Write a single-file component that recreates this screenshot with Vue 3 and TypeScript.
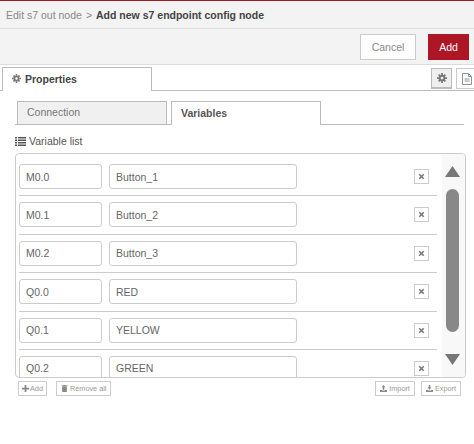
<script setup lang="ts">
const rows = [
  { addr: 'M0.0', name: 'Button_1' },
  { addr: 'M0.1', name: 'Button_2' },
  { addr: 'M0.2', name: 'Button_3' },
  { addr: 'Q0.0', name: 'RED' },
  { addr: 'Q0.1', name: 'YELLOW' },
  { addr: 'Q0.2', name: 'GREEN' }
]
</script>

<template>
  <div class="tray">
    <div class="title">
      <span class="crumb">Edit s7 out node</span>
      <span class="sep">&gt;</span>
      <b>Add new s7 endpoint config node</b>
    </div>
    <div class="toolbar">
      <button class="btn-cancel">Cancel</button>
      <button class="btn-add">Add</button>
    </div>
    <div class="tabs-top">
      <div class="tab-main">
        <svg class="ico-gear" viewBox="0 0 16 16"><path d="M8 2.6a5.4 5.4 0 1 0 0 10.8A5.4 5.4 0 0 0 8 2.6zm0 3.2a2.2 2.2 0 1 1 0 4.4 2.2 2.2 0 0 1 0-4.4z" /><path d="M6.6 0h2.8v3H6.6zM6.6 13h2.8v3H6.6zM0 6.6h3v2.8H0zM13 6.6h3v2.8h-3zM1.6 3.6l2-2 2 2-2 2zM10.4 3.6l2-2 2 2-2 2zM1.6 12.4l2-2 2 2-2 2zM10.4 12.4l2-2 2 2-2 2z" /></svg>
        Properties
      </div>
      <div class="side-btns">
        <div class="side-btn active">
          <svg class="ico-gear big" viewBox="0 0 16 16"><path d="M8 2.6a5.4 5.4 0 1 0 0 10.8A5.4 5.4 0 0 0 8 2.6zm0 3.2a2.2 2.2 0 1 1 0 4.4 2.2 2.2 0 0 1 0-4.4z" /><path d="M6.6 0h2.8v3H6.6zM6.6 13h2.8v3H6.6zM0 6.6h3v2.8H0zM13 6.6h3v2.8h-3zM1.6 3.6l2-2 2 2-2 2zM10.4 3.6l2-2 2 2-2 2zM1.6 12.4l2-2 2 2-2 2zM10.4 12.4l2-2 2 2-2 2z" /></svg>
        </div>
        <div class="side-btn">
          <svg class="ico-file" viewBox="0 0 10 12"><path d="M.5.5h6L9.5 3.5v8H.5zM6.5.5v3h3M2.5 6h5M2.5 8h5" /></svg>
        </div>
      </div>
    </div>
    <div class="content">
      <div class="tabs-inner">
        <div class="tab-in off">Connection</div>
        <div class="tab-in on">Variables</div>
      </div>
      <div class="list-label">
        <svg class="ico-list" viewBox="0 0 11 9"><path d="M0 0h2v1.5H0zM3 0h8v1.5H3zM0 2.5h2V4H0zM3 2.5h8V4H3zM0 5h2v1.5H0zM3 5h8v1.5H3zM0 7.5h2V9H0zM3 7.5h8V9H3z" /></svg>
        Variable list
      </div>
      <div class="list-box">
        <div class="rows">
          <div v-for="r in rows" :key="r.addr" class="row">
            <input class="inp addr" :value="r.addr" />
            <input class="inp name" :value="r.name" />
            <span class="del">
              <svg viewBox="0 0 8 8"><path d="M1.4 1.4l5.2 5.2M6.6 1.4L1.4 6.6" /></svg>
            </span>
          </div>
        </div>
        <div class="scroll">
          <svg class="arrow" viewBox="0 0 15 11"><path d="M7.5 0L15 11H0z" /></svg>
          <div class="track"><div class="thumb"></div></div>
          <svg class="arrow" viewBox="0 0 15 11"><path d="M0 0h15L7.5 11z" /></svg>
        </div>
      </div>
      <div class="actions">
        <div class="group left">
          <button class="mini tight">
            <svg viewBox="0 0 8 8"><path d="M3 0h2v3h3v2H5v3H3V5H0V3h3z" /></svg>Add
          </button>
          <button class="mini">
            <svg viewBox="0 0 8 9"><path d="M1 2h6v7H1zM0 .8h8v.8H0zM2.5 0h3v.8h-3z" /></svg>Remove all
          </button>
        </div>
        <div class="group right">
          <button class="mini">
            <svg viewBox="0 0 9 9"><path d="M4.5 0L7 3H5.5v3h-2V3H2zM0 6.5h2.5v.7h4v-.7H9V9H0z" /></svg>Import
          </button>
          <button class="mini">
            <svg viewBox="0 0 9 9"><path d="M3.5 0h2v3H7L4.5 6 2 3h1.5zM0 6.5h2.5v.7h4v-.7H9V9H0z" /></svg>Export
          </button>
        </div>
      </div>
    </div>
  </div>
</template>

<style>
html,
body {
  margin: 0;
  background: #fff;
}
</style>

<style scoped>
.tray {
  width: 474px;
  height: 444px;
  overflow: hidden;
  font-family: 'Liberation Sans', Arial, sans-serif;
  font-size: 10.5px;
  color: #555;
  background: #fff;
  box-sizing: border-box;
}
.title {
  height: 29px;
  box-sizing: border-box;
  border-top: 1px solid #ad1625;
  border-bottom: 1px solid #ddd;
  background: #f3f3f3;
  display: flex;
  align-items: center;
  padding-left: 6px;
  gap: 4px;
  font-size: 10.5px;
  white-space: nowrap;
}
.crumb,
.sep {
  color: #888;
}
.title b {
  color: #444;
}
.toolbar {
  height: 36px;
  box-sizing: border-box;
  background: #f3f3f3;
  border-bottom: 1px solid #ddd;
  display: flex;
  justify-content: flex-end;
  align-items: flex-start;
  padding: 5px 5px 0 0;
  gap: 12px;
}
.toolbar button {
  height: 26px;
  font: inherit;
  font-size: 10.5px;
  padding: 0;
  box-sizing: border-box;
}
.btn-cancel {
  width: 56px;
  background: #fff;
  border: 1px solid #ccc;
  color: #888;
}
.btn-add {
  width: 41px;
  background: #ad1625;
  border: 1px solid #ad1625;
  color: #fff;
  font-weight: 700;
}
.tabs-top {
  height: 26px;
  box-sizing: border-box;
  border-bottom: 1px solid #bbb;
  display: flex;
  padding: 2px 0 0 2px;
}
.tab-main {
  width: 150px;
  height: 24px;
  box-sizing: border-box;
  border: 1px solid #bbb;
  border-bottom: none;
  background: #fff;
  display: flex;
  align-items: center;
  padding: 0 0 2px 9px;
  gap: 4px;
  font-size: 10.5px;
  font-weight: 700;
  color: #444;
}
.ico-gear {
  width: 9px;
  height: 9px;
  fill: #777;
}
.ico-gear.big {
  width: 10px;
  height: 10px;
}
.side-btns {
  margin-left: auto;
  margin-right: -3px;
  margin-top: 1px;
  display: flex;
  gap: 4px;
}
.side-btn {
  width: 21px;
  height: 21px;
  box-sizing: border-box;
  border: 1px solid #ccc;
  display: flex;
  align-items: center;
  justify-content: center;
  background: #fff;
}
.side-btn.active {
  background: #efefef;
  border-color: #bbb;
  border-bottom-width: 2px;
}
.ico-file {
  width: 10px;
  height: 12px;
  fill: none;
  stroke: #8a94a0;
  stroke-width: 1;
}
.content {
  padding: 10px 9px 0 15px;
}
.tabs-inner {
  display: flex;
  gap: 4px;
  height: 24px;
  padding-left: 2px;
  box-sizing: border-box;
  border-bottom: 1px solid #bbb;
  margin-right: 1px;
}
.tab-in {
  width: 150px;
  height: 24px;
  box-sizing: border-box;
  border: 1px solid #bbb;
  display: flex;
  align-items: center;
  padding: 0 0 2px 9px;
}
.tab-in.off {
  background: #f0f0f0;
  color: #777;
}
.tab-in.on {
  background: #fff;
  border-bottom: none;
  font-weight: 700;
  color: #555;
}
.list-label {
  margin-top: 9px;
  height: 14px;
  display: flex;
  align-items: center;
  gap: 3px;
  color: #555;
}
.ico-list {
  width: 11px;
  height: 9px;
  fill: #555;
}
.list-box {
  margin-top: 5px;
  height: 225px;
  width: 451px;
  box-sizing: border-box;
  border: 1px solid #ccc;
  border-radius: 4px;
  display: flex;
  overflow: hidden;
}
.rows {
  flex: 1;
  padding-top: 4px;
  overflow: hidden;
}
.row {
  display: flex;
  align-items: flex-start;
  height: 38.4px;
  box-sizing: border-box;
  padding-top: 6px;
  margin: 0 5px 0 3px;
  border-bottom: 1px solid #ccc;
}
.inp {
  height: 25px;
  box-sizing: border-box;
  border: 1px solid #ccc;
  border-radius: 3px;
  font: inherit;
  color: #666;
  padding: 0 6px;
  outline: none;
  background: #fff;
}
.addr {
  width: 83px;
}
.name {
  width: 188px;
  margin-left: 7px;
}
.del {
  width: 15px;
  height: 15px;
  box-sizing: border-box;
  border: 1px solid #ccc;
  margin: 5px 0 0 117px;
  display: flex;
  align-items: center;
  justify-content: center;
}
.del svg {
  width: 7px;
  height: 7px;
  fill: none;
  stroke: #777;
  stroke-width: 1.7;
}
.scroll {
  width: 23px;
  flex: none;
  background: #f8f8f8;
  display: flex;
  flex-direction: column;
  align-items: center;
  padding: 12px 2px 12px 0;
  box-sizing: border-box;
}
.arrow {
  width: 15px;
  height: 11px;
  fill: #777;
}
.track {
  flex: 1;
  padding: 12px 0 22px;
  display: flex;
}
.thumb {
  width: 13px;
  background: #888;
  border-radius: 7px;
}
.actions {
  display: flex;
  justify-content: space-between;
  margin-top: 3px;
  padding: 0 4px 0 3px;
}
.group {
  display: flex;
}
.group.left {
  gap: 9px;
}
.group.right {
  gap: 6px;
}
.mini {
  height: 15px;
  padding: 0 4px;
  box-sizing: border-box;
  border: 1px solid #ccc;
  background: #fff;
  font: inherit;
  font-size: 7.3px;
  color: #999;
  display: flex;
  align-items: center;
  gap: 2px;
}
.mini.tight {
  padding: 0 3px;
  gap: 1px;
}
.mini svg {
  width: 7px;
  height: 7px;
  fill: #888;
}
</style>
